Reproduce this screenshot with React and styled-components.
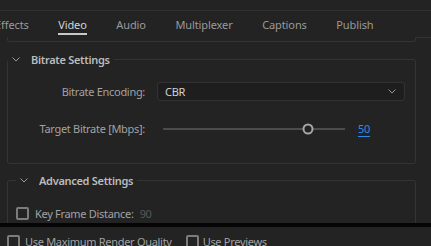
import React from 'react';
import styled, { createGlobalStyle } from 'styled-components';

const GlobalStyle = createGlobalStyle`
  html, body {
    margin: 0;
    padding: 0;
    background: #232323;
  }
  body {
    font-family: "Noto Sans", "Open Sans", sans-serif;
    font-size: 11px;
    letter-spacing: -0.3px;
    color: #a3a3a3;
    overflow: hidden;
  }
`

const Page = styled.div`
  width: 431px;
  height: 246px;
  display: flex;
  flex-direction: column;
  overflow: hidden;
  background: #232323;
`

const TopStrip = styled.div`
  height: 10px;
  border-bottom: 1px solid #303030;
  flex: none;
`

const TabBar = styled.div`
  display: flex;
  gap: 29.5px;
  margin-left: -5px;
  height: 26px;
  flex: none;
`

const Tab = styled.div`
  position: relative;
  display: flex;
  align-items: center;
  height: 24px;
  box-sizing: border-box;
  padding-top: 3px;
  font-size: 11px;
  letter-spacing: -0.1px;
  color: ${p => (p.$active ? '#d4d4d4' : '#9a9a9a')};
  white-space: nowrap;

  &::after {
    content: '';
    display: ${p => (p.$active ? 'block' : 'none')};
    position: absolute;
    left: 0;
    right: 0;
    bottom: 0;
    height: 2px;
    background: #c9c9c9;
  }
`

const Scroller = styled.div`
  flex: 1;
  display: flex;
  min-height: 0;
  overflow: hidden;
`

const Content = styled.div`
  width: 416px;
  flex: none;
  display: flex;
  flex-direction: column;
  gap: 8px;
  padding-left: 7px;
  box-sizing: border-box;
`

const Gutter = styled.div`
  flex: 1;
  border-top: 1px solid #333;
`

const BoxTail = styled.div`
  height: 5px;
  width: 409px;
  margin-bottom: 1px;
  box-sizing: border-box;
  border: 1px solid #343434;
  border-top: none;
  border-radius: 0 0 3px 3px;
  flex: none;
`

const Group = styled.fieldset`
  margin: 0;
  width: 409px;
  box-sizing: border-box;
  border: 1px solid #343434;
  border-radius: 3px;
  padding: ${p => p.$pad || '15px 0 25px'};
  flex: none;
`

const Legend = styled.legend`
  display: flex;
  align-items: center;
  gap: 11px;
  margin-left: 0;
  padding: 0 4px 0 4px;
  height: 16px;
  font-size: 11px;
  font-weight: 600;
  color: #bcbcbc;
`

const Rows = styled.div`
  display: grid;
  grid-template-columns: 137px 248px;
  column-gap: 12px;
  row-gap: 18px;
  align-items: center;
`

const Label = styled.div`
  text-align: right;
  font-size: 11px;
  color: #a2a2a2;
  white-space: nowrap;
`

const Select = styled.div`
  height: 19px;
  box-sizing: border-box;
  background: #1e1e1e;
  border: 1px solid #323232;
  border-radius: 3px;
  display: flex;
  align-items: center;
  justify-content: space-between;
  padding: 0 8px 0 7px;
  font-size: 11px;
  color: #d2d2d2;
`

const SliderCell = styled.div`
  display: flex;
  align-items: center;
  height: 19px;
  gap: 13px;
  padding-left: 6px;
`

const Track = styled.div`
  position: relative;
  width: 182px;
  height: 2px;
  background: #4c4c4c;
`

const Thumb = styled.div`
  position: absolute;
  top: 50%;
  width: 11px;
  height: 11px;
  box-sizing: border-box;
  border: 2px solid #a6a6a6;
  border-radius: 50%;
  background: #232323;
  transform: translate(-50%, -50%);
`

const Value = styled.span`
  font-size: 11px;
  color: #2d8ceb;
  text-decoration: underline;
  text-underline-offset: 3px;
`

const CheckRow = styled.div`
  display: flex;
  align-items: center;
  gap: ${p => p.$gap || '6px'};
  font-size: 11px;
  color: #a2a2a2;
  white-space: nowrap;
`

const Box = styled.span`
  width: 13px;
  height: 13px;
  box-sizing: border-box;
  border: 2px solid #7c7c7c;
  border-radius: 2px;
  flex: none;
`

const Dim = styled.span`
  color: #575757;
`

const Band = styled.div`
  height: 4px;
  background: #050505;
  flex: none;
`

const BottomBar = styled.div`
  height: 19px;
  box-sizing: border-box;
  flex: none;
  display: flex;
  align-items: flex-start;
  padding: 7px 0 0 7px;
  gap: 14px;
`

const Chevron = () => (
  <svg width="8" height="5" viewBox="0 0 8 5" fill="none">
    <path d="M0.5 0.5L4 4L7.5 0.5" stroke="#9a9a9a" strokeWidth="1" />
  </svg>
)

const tabs = ['Effects', 'Video', 'Audio', 'Multiplexer', 'Captions', 'Publish']

export default function App() {
  const pct = 0.795
  return (
    <Page>
      <GlobalStyle />
      <TopStrip />
      <TabBar>
        {tabs.map(t => (
          <Tab key={t} $active={t === 'Video'}>{t}</Tab>
        ))}
      </TabBar>
      <Scroller>
        <Content>
          <BoxTail />
          <Group>
            <Legend><Chevron />Bitrate Settings</Legend>
            <Rows>
              <Label>Bitrate Encoding:</Label>
              <Select>
                CBR
                <Chevron />
              </Select>
              <Label>Target Bitrate [Mbps]:</Label>
              <SliderCell>
                <Track>
                  <Thumb style={{ left: `${pct * 100}%` }} />
                </Track>
                <Value>50</Value>
              </SliderCell>
            </Rows>
          </Group>
          <Group $pad="18px 0 20px 8px">
            <Legend><Chevron />Advanced Settings</Legend>
            <CheckRow>
              <Box />
              <span>Key Frame Distance:</span>
              <Dim>90</Dim>
            </CheckRow>
          </Group>
        </Content>
        <Gutter />
      </Scroller>
      <Band />
      <BottomBar>
        <CheckRow $gap="5px">
          <Box />
          <span>Use Maximum Render Quality</span>
        </CheckRow>
        <CheckRow $gap="4px">
          <Box />
          <span>Use Previews</span>
        </CheckRow>
      </BottomBar>
    </Page>
  )
}
